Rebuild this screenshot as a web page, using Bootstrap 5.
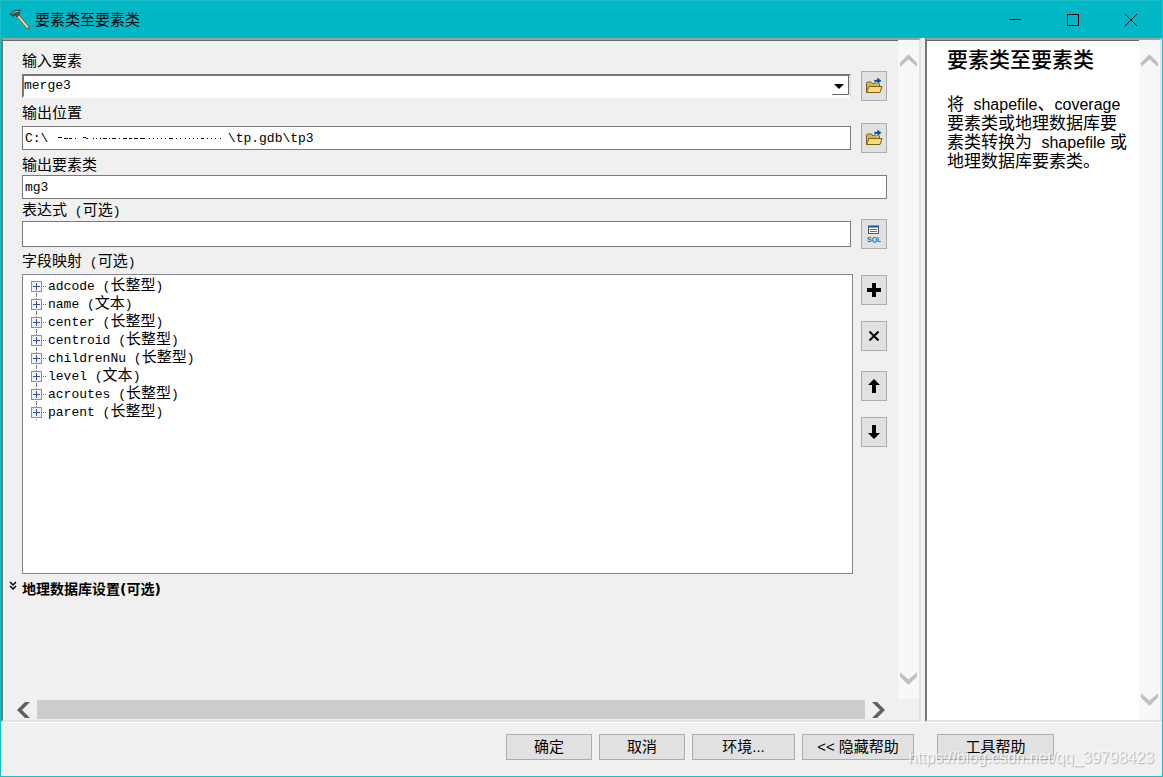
<!DOCTYPE html>
<html lang="zh-CN">
<head>
<meta charset="utf-8">
<meta name="viewport" content="width=device-width, initial-scale=1">
<title>要素类至要素类</title>
<link rel="stylesheet" href="https://cdn.jsdelivr.net/npm/bootstrap@5.3.0/dist/css/bootstrap.min.css">
<script src="https://cdn.jsdelivr.net/npm/bootstrap@5.3.0/dist/js/bootstrap.bundle.min.js"></script>
<style>
  :root { --teal: #00b7c6; --face: #f0f0f0; }
  body { font: 15px/18px "Liberation Sans", "Noto Sans CJK SC", sans-serif; color: #000; }
  svg { display: block; flex: none; }
  .window { background: var(--face); border: 1px solid #1abfcb; }
  .titlebar { background: var(--teal); height: 37px; padding: 0 2px 0 8px; }
  .caption-btn { width: 58px; height: 36px; border: 0; background: none; padding: 0; color: #000; }
  .sunken { border: 2px solid; border-color: #a0a0a0 #e3e3e3 #e3e3e3 #777; box-shadow: inset 0 1px #696969; }
  .form-area { padding: 9px 11px 0 19px; min-width: 0; }
  .field-label { height: 22px; padding-top: 2px; line-height: 20px; }
  .field-label.tight { height: 20px; line-height: 18px; }
  .lat { font-family: "Liberation Mono", "Noto Sans CJK SC", monospace; font-size: 13px; white-space: pre; }
  .text-field, .combo { font: 13px/18px "Liberation Mono", "Noto Sans CJK SC", monospace; color: #000; background: #fff;
    border: 1px solid #7a7a7a; border-radius: 0; padding: 0 2px; width: 100%; }
  .text-field { height: 24px; }
  .text-field.tall { height: 26px; }
  .combo { height: 24px; padding: 0; appearance: none; border: 2px solid; border-color: #777 #e3e3e3 #fff #777; }
  .combo-arrow { right: 2px; top: 2px; pointer-events: none; }
  .redaction { left: 36px; top: 10px; pointer-events: none; }
  .tool-btn { width: 26px; height: 30px; background: #e1e1e1; border: 1px solid #adadad; border-radius: 0; padding: 0; flex: none;
    display: flex; align-items: center; justify-content: center; }
  .row-gap { gap: 10px; }
  .map-row { gap: 8px; margin-top: 3px; }
  .field-tree { height: 300px; background: #fff; border: 1px solid #828790; padding: 1px 0 0 8px; }
  .field-tree li { height: 18px; }
  .map-tools { padding-top: 1px; gap: 16px; }
  .map-tools .apart { margin-top: 4px; }
  .section-btn { border: 0; background: none; padding: 0; margin: 5px 0 0 -13px; gap: 5px; font-size: 14px; font-weight: 700; line-height: 20px; color: #000; }
  .section-btn span { font-family: "DejaVu Sans", sans-serif; }
  .vbar { width: 21px; background: #f8f8f8; flex: none; padding: 14px 0; }
  .vbar button, .hbar button { border: 0; background: none; padding: 0; color: #c0c0c0; }
  .hbar { height: 21px; padding: 0 34px 0 14px; gap: 7px; }
  .hbar button { color: #606060; }
  .thumb { background: #cdcdcd; height: 19px; }
  .help-pane { width: 237px; flex: none; background: #fff; }
  .help-text { padding: 6px 0 0 20px; min-width: 0; }
  .help-text h1 { font-size: 21px; line-height: 28px; font-weight: 500; margin: 0 0 21px; }
  .help-text p { font-size: 17px; line-height: 19px; white-space: nowrap; margin: 0; }
  .help-text p span { font-size: 16px; }
  .footer-bar { height: 54px; border-top: 1px solid #fff; padding: 11px 108px 0 0; gap: 7px; }
  .dlg-btn { height: 26px; background: #e1e1e1; border: 1px solid #adadad; border-radius: 0; padding: 0; font-size: 15px; line-height: 20px; color: #000; }
  .w-a { width: 86px; } .w-b { width: 103px; } .w-c { width: 112px; } .w-d { width: 117px; margin-left: 16px; }
  .watermark { right: 8px; bottom: 8px; font-size: 16px; line-height: 20px; color: #fffc; text-shadow: 1px 1px 1px #0004; pointer-events: none; }
</style>
</head>
<body>
<svg width="0" height="0" class="position-absolute" aria-hidden="true">
  <symbol id="node" viewBox="0 0 17 18">
    <path d="M5.500 0v5M5.500 17v1" stroke="#777" stroke-dasharray="3 1"/>
    <rect x=".5" y="5.500" width="10" height="10" fill="#f3f3f3" stroke="#919191"/>
    <path d="M2 10.500h7M5.500 7v7" stroke="#2f4fa3"/>
    <path d="M12 10.500h1M14 10.500h1" stroke="#777"/>
  </symbol>
  <symbol id="node-first" viewBox="0 0 17 18">
    <path d="M5.500 17v1" stroke="#777"/>
    <rect x=".5" y="5.500" width="10" height="10" fill="#f3f3f3" stroke="#919191"/>
    <path d="M2 10.500h7M5.500 7v7" stroke="#2f4fa3"/>
    <path d="M12 10.500h1M14 10.500h1" stroke="#777"/>
  </symbol>
  <symbol id="folder" viewBox="0 0 18 18">
    <path d="M1.500 15V6l1-1h4l1 1.500h7V15z" fill="#d9b548" stroke="#7d6019"/>
    <path d="M1.500 15.500L4 9.500h13l-2 6z" fill="#f3da7c" stroke="#7d6019"/>
    <path d="M9 6V2.500h3V0l5 3.800-5 3.700V5h-1v1z" fill="#124f91" stroke="#dceaf4" stroke-width=".7"/>
  </symbol>
  <symbol id="chev-up" viewBox="0 0 16 12"><path d="M0 12V8l8-8 8 8v4L8 5z" fill="currentColor"/></symbol>
  <symbol id="chev-down" viewBox="0 0 16 12"><path d="M0 0v4l8 8 8-8V0L8 7z" fill="currentColor"/></symbol>
</svg>
<div class="window min-vh-100 d-flex flex-column position-relative">
  <header class="titlebar d-flex align-items-center">
    <svg width="22" height="22" viewBox="0 0 22 22"><path d="M9 7L19 18.500" stroke="#6d5f4c" stroke-width="3.600" stroke-linecap="round"/><path d="M8.500 6.500L18.500 18" stroke="#e0cdb4" stroke-width="2" stroke-linecap="round"/><path d="M1 5l5-3.500L12 1l-2.500 2L11 5 8 8 6 6 4 7.500z" fill="#4b5151" stroke="#343838" stroke-width=".7"/><path d="M3 4.500l4-2h2" stroke="#a7b2b1" fill="none"/></svg>
    <span class="ms-1 flex-fill">要素类至要素类</span>
    <button type="button" class="caption-btn" aria-label="最小化"><svg class="mx-auto" width="12" height="12"><path d="M0 5.500h12" stroke="#000"/></svg></button>
    <button type="button" class="caption-btn" aria-label="最大化"><svg class="mx-auto" width="12" height="12"><rect x=".5" y=".5" width="11" height="11" fill="none" stroke="#000"/></svg></button>
    <button type="button" class="caption-btn" aria-label="关闭"><svg class="mx-auto" width="12" height="12"><path d="M0 0l12 12M12 0L0 12" stroke="#000"/></svg></button>
  </header>
  <main class="d-flex flex-fill">
    <section class="sunken flex-fill d-flex flex-column me-1">
      <div class="d-flex flex-fill">
        <form class="form-area flex-fill">
          <label class="field-label d-block" for="inFeat">输入要素</label>
          <div class="d-flex align-items-center row-gap">
            <div class="position-relative flex-fill">
              <select class="combo d-block" id="inFeat"><option>merge3</option></select>
              <svg class="combo-arrow position-absolute" width="17" height="20"><path d="M0 0h17v20H0z" fill="#fff"/><path d="M2 8h10L7 13z"/><path d="M0 18.500h16.500V0" fill="none" stroke="#696969"/></svg>
            </div>
            <button type="button" class="tool-btn" aria-label="浏览输入要素"><svg width="18" height="18"><use href="#folder"/></svg></button>
          </div>
          <label class="field-label d-block" for="outLoc">输出位置</label>
          <div class="d-flex align-items-center row-gap">
            <div class="position-relative flex-fill">
              <input class="text-field d-block" id="outLoc" value="C:\                       \tp.gdb\tp3">
              <svg class="redaction position-absolute" width="166" height="4"><path d="M0 1.500h4M6 2.500h4M11 2.500h3M17 2.500h1M25 1.500h3M28 2.500h2M35 2.500h1M38 2.500h1M42 2.500h1M45 2.500h4M51 2.500h1M54 2.500h4M61 2.500h1M65 2.500h4M71 2.500h3M76 2.500h4M82 2.500h5M91 2.500h1M95 2.500h1M99 2.500h1M103 2.500h1M107 2.500h1M111 2.500h4M118 2.500h1M122 2.500h1M127 2.500h1M131 2.500h1M135 2.500h1M139 2.500h1M143 2.500h3M149 2.500h1M153 2.500h1M157 2.500h1M162 2.500h1" stroke="#000"/></svg>
            </div>
            <button type="button" class="tool-btn" aria-label="浏览输出位置"><svg width="18" height="18"><use href="#folder"/></svg></button>
          </div>
          <label class="field-label d-block" for="outName">输出要素类</label>
          <input class="text-field d-block" id="outName" value="mg3">
          <label class="field-label tight d-block" for="expr">表达式<span class="lat"> (</span>可选<span class="lat">)</span></label>
          <div class="d-flex align-items-center row-gap">
            <input class="text-field tall flex-fill" id="expr">
            <button type="button" class="tool-btn" aria-label="SQL"><svg width="14" height="18" viewBox="0 0 14 18"><rect x="1.500" y="1.500" width="10" height="7" fill="#fff" stroke="#555"/><path d="M1 1.500h11" stroke="#0a57a4" stroke-width="2"/><path d="M3 4.500h7M3 6.500h7" stroke="#1b83c5"/><text x="0" y="17" font-size="7" font-weight="700" font-family="Liberation Sans" fill="#0878a8">SQL</text></svg></button>
          </div>
          <div class="field-label">字段映射<span class="lat"> (</span>可选<span class="lat">)</span></div>
          <div class="d-flex map-row">
            <ul class="field-tree list-unstyled flex-fill mb-0">
              <li class="d-flex"><svg width="17" height="18"><use href="#node-first"/></svg><div><span class="lat">adcode (</span>长整型<span class="lat">)</span></div></li>
              <li class="d-flex"><svg width="17" height="18"><use href="#node"/></svg><div><span class="lat">name (</span>文本<span class="lat">)</span></div></li>
              <li class="d-flex"><svg width="17" height="18"><use href="#node"/></svg><div><span class="lat">center (</span>长整型<span class="lat">)</span></div></li>
              <li class="d-flex"><svg width="17" height="18"><use href="#node"/></svg><div><span class="lat">centroid (</span>长整型<span class="lat">)</span></div></li>
              <li class="d-flex"><svg width="17" height="18"><use href="#node"/></svg><div><span class="lat">childrenNu (</span>长整型<span class="lat">)</span></div></li>
              <li class="d-flex"><svg width="17" height="18"><use href="#node"/></svg><div><span class="lat">level (</span>文本<span class="lat">)</span></div></li>
              <li class="d-flex"><svg width="17" height="18"><use href="#node"/></svg><div><span class="lat">acroutes (</span>长整型<span class="lat">)</span></div></li>
              <li class="d-flex"><svg width="17" height="18"><use href="#node"/></svg><div><span class="lat">parent (</span>长整型<span class="lat">)</span></div></li>
            </ul>
            <div class="map-tools d-flex flex-column">
              <button type="button" class="tool-btn" aria-label="添加"><svg width="14" height="14"><path d="M5 0h4v5h5v4H9v5H5V9H0V5h5z"/></svg></button>
              <button type="button" class="tool-btn" aria-label="移除"><svg width="10" height="10"><path d="M.5.500l9 9M9.500.500l-9 9" stroke="#000" stroke-width="2"/></svg></button>
              <button type="button" class="tool-btn apart" aria-label="上移"><svg width="12" height="14"><path d="M6 0l6 6H8v8H4V6H0z"/></svg></button>
              <button type="button" class="tool-btn" aria-label="下移"><svg width="12" height="14"><path d="M6 14l6-6H8V0H4v8H0z"/></svg></button>
            </div>
          </div>
          <button type="button" class="section-btn d-flex"><svg width="8" height="16"><path d="M1 3l3 3 3-3M1 7l3 3 3-3" fill="none" stroke="#000" stroke-width="1.500"/></svg><div>地理数据库设置<span>(</span>可选<span>)</span></div></button>
        </form>
        <div class="vbar d-flex flex-column justify-content-between align-items-center">
          <button type="button" aria-label="向上滚动"><svg width="17" height="13"><use href="#chev-up"/></svg></button>
          <button type="button" aria-label="向下滚动"><svg width="17" height="13"><use href="#chev-down"/></svg></button>
        </div>
      </div>
      <div class="hbar d-flex align-items-center">
        <button type="button" aria-label="向左滚动"><svg width="13" height="16"><path d="M13 0H8L0 8l8 8h5L5 8z" fill="currentColor"/></svg></button>
        <div class="thumb flex-fill"></div>
        <button type="button" aria-label="向右滚动"><svg width="13" height="16"><path d="M0 0h5l8 8-8 8H0l8-8z" fill="currentColor"/></svg></button>
      </div>
    </section>
    <aside class="sunken help-pane d-flex">
      <div class="help-text flex-fill">
        <h1>要素类至要素类</h1>
        <p>将&nbsp; <span>shapefile</span>、<span>coverage</span><br>要素类或地理数据库要<br>素类转换为&nbsp; <span>shapefile </span>或<br>地理数据库要素类。</p>
      </div>
      <div class="vbar d-flex flex-column justify-content-between align-items-center">
        <button type="button" aria-label="帮助向上滚动"><svg width="17" height="13"><use href="#chev-up"/></svg></button>
        <button type="button" aria-label="帮助向下滚动"><svg width="17" height="13"><use href="#chev-down"/></svg></button>
      </div>
    </aside>
  </main>
  <footer class="footer-bar d-flex justify-content-end">
    <button type="button" class="dlg-btn w-a">确定</button>
    <button type="button" class="dlg-btn w-a">取消</button>
    <button type="button" class="dlg-btn w-b">环境...</button>
    <button type="button" class="dlg-btn w-c">&lt;&lt; 隐藏帮助</button>
    <button type="button" class="dlg-btn w-d">工具帮助</button>
  </footer>
  <div class="watermark position-absolute">https://blog.csdn.net/qq_39798423</div>
</div>
</body>
</html>
